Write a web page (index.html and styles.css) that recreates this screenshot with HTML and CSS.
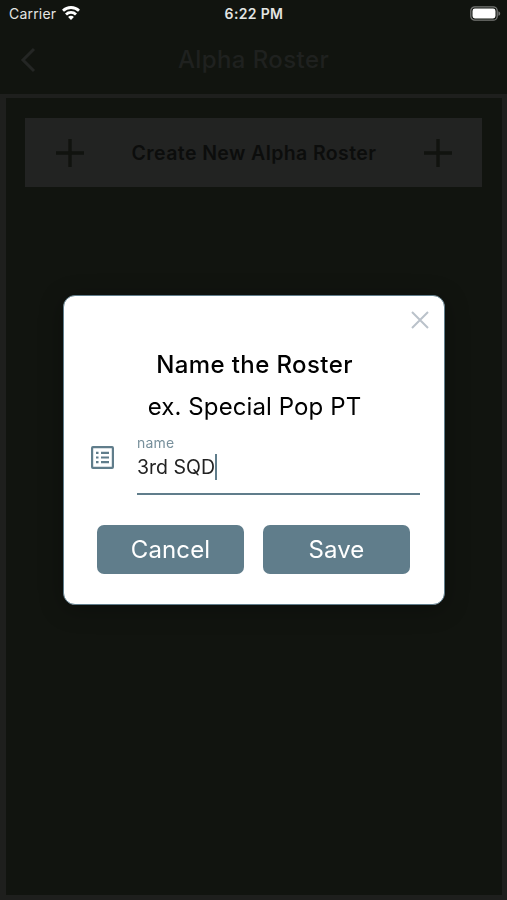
FILE: index.html
```html
<!DOCTYPE html>
<html lang="en">

<head>
    <meta charset="utf-8">
    <meta name="viewport" content="width=device-width, initial-scale=1">
    <title>Alpha Roster</title>
    <link rel="stylesheet" href="styles.css">
</head>

<body>
    <div class="status-bar">
        <div class="carrier">
            <span>Carrier</span>
            <svg class="wifi" width="18" height="14" viewBox="0 0 18 14" fill="none" stroke="#fff" stroke-width="2.8">
                <path d="M1 4.8a11.4 11.4 0 0 1 16 0" />
                <path d="M4 8.4a7.1 7.1 0 0 1 10 0" />
                <path d="M9 14L6.1 11.1a4 4 0 0 1 5.8 0z" fill="#fff" stroke="none" />
            </svg>
        </div>
        <span class="clock">6:22 PM</span>
        <svg class="battery" width="31" height="15" viewBox="0 0 31 15">
            <rect x=".8" y=".8" width="26.4" height="13.4" rx="4" fill="none" stroke="#777876" stroke-width="1.3" />
            <rect x="2.5" y="2.5" width="23" height="10" rx="2.4" fill="#fff" />
            <path d="M28.4 5.2c2.4.8 2.4 3.8 0 4.6z" fill="#777876" />
        </svg>
    </div>
    <header class="header">
        <svg class="back" width="16" height="26" viewBox="0 0 16 26" fill="none" stroke="#242624" stroke-width="3">
            <path d="M14 2L3 13l11 11" />
        </svg>
        <h1>Alpha Roster</h1>
    </header>
    <main class="content">
        <button class="create">
            <svg width="28" height="28" viewBox="0 0 28 28" stroke="#11130f" stroke-width="3.4">
                <path d="M14 0v28M0 14h28" />
            </svg>
            <span>Create New Alpha Roster</span>
            <svg width="28" height="28" viewBox="0 0 28 28" stroke="#11130f" stroke-width="3.4">
                <path d="M14 0v28M0 14h28" />
            </svg>
        </button>
    </main>

    <div class="overlay">
        <div class="dialog">
            <button class="close" aria-label="Close">
                <svg width="18" height="18" viewBox="0 0 18 18" stroke="#bac2ca" stroke-width="2">
                    <path d="M1 1l16 16M17 1L1 17" />
                </svg>
            </button>
            <h2>Name the Roster</h2>
            <p class="hint">ex. Special Pop PT</p>
            <div class="field">
                <svg class="list-icon" width="23" height="23" viewBox="0 0 23 23" fill="none" stroke="#607d8b" stroke-width="2.2">
                    <rect x="1.1" y="1.1" width="20.8" height="20.8" rx=".8" />
                    <path d="M5 6.9h2.5M5 11.5h2.5M5 16.1h2.5M10 6.9h8M10 11.5h8M10 16.1h8" />
                </svg>
                <div class="input">
                    <span class="label">name</span>
                    <div class="value"><span>3rd SQD</span><i class="caret"></i></div>
                </div>
            </div>
            <div class="actions">
                <button>Cancel</button>
                <button>Save</button>
            </div>
        </div>
    </div>
</body>

</html>
```
FILE: styles.css
```css
* {
    box-sizing: border-box;
    --slate: #607d8b;
    --backdrop: #11140f;
    --frame: #1e1f1d;
}

body {
    margin: 0;
    height: 100vh;
    display: flex;
    flex-direction: column;
    background: var(--backdrop);
    font-family: Inter, sans-serif;
    overflow: hidden;
}

h1,
h2,
p {
    margin: 0;
}

button {
    font-family: inherit;
    border: 0;
    padding: 0;
}

.status-bar {
    display: grid;
    grid-template-columns: 1fr auto 1fr;
    align-items: center;
    height: 27px;
    padding: 0 6px 0 9px;
    color: #e4e5e3;
    font-size: 14px;
}

.carrier {
    display: flex;
    align-items: center;
    gap: 6px;
    letter-spacing: 0.2px;
}

.wifi {
    margin-bottom: 1px;
}

.clock {
    margin-right: 2px;
    font-weight: 600;
    font-size: 14px;
    letter-spacing: 0.35px;
}

.battery {
    justify-self: end;
    margin-bottom: 1px;
}

.header {
    display: grid;
    grid-template-columns: 40px 1fr 40px;
    align-items: center;
    height: 67px;
    padding: 0 20px 2px;
}

h1 {
    color: #1f211f;
    font-size: 24px;
    font-weight: 500;
    letter-spacing: 0.4px;
    text-align: center;
}

.content {
    flex: 1;
    border: solid var(--frame);
    border-width: 4px 5px 5px 6px;
    padding: 20px 20px 20px 19px;
}

.create {
    display: flex;
    align-items: center;
    justify-content: space-between;
    width: 100%;
    height: 69px;
    padding: 0 30px 0 31px;
    background: #222322;
    color: #0c0d0c;
    font-size: 19.5px;
    font-weight: 600;
    letter-spacing: 0.4px;
}

.overlay {
    position: fixed;
    inset: 0;
    display: grid;
    place-items: center;
    padding-left: 1px;
}

.dialog {
    display: flex;
    flex-direction: column;
    width: 382px;
    height: 310px;
    padding: 15px 24px 30px 27px;
    background: #fff;
    border: 1px solid var(--slate);
    border-radius: 12px;
    box-shadow: 0 4px 24px rgba(0, 0, 0, 0.3);
    text-align: center;
}

.close {
    align-self: flex-end;
    width: 18px;
    height: 18px;
    margin-right: -9px;
    background: none;
}

.close svg {
    display: block;
}

h2 {
    margin: 21px 2px 0 0;
    font-size: 24px;
    font-weight: 500;
    line-height: 30px;
    letter-spacing: 0.4px;
}

.hint {
    margin: 12px 2px 0 0;
    font-size: 24px;
    line-height: 30px;
    letter-spacing: 0.1px;
}

.field {
    display: flex;
    gap: 23px;
    margin-top: 12px;
    text-align: left;
}

.list-icon {
    margin-top: 12px;
}

.input {
    flex: 1;
    height: 61px;
    border-bottom: 2px solid var(--slate);
}

.label {
    display: block;
    color: #78909c;
    font-size: 14px;
    line-height: 18px;
    letter-spacing: 0.2px;
}

.value {
    display: flex;
    align-items: center;
    height: 30px;
    color: #222;
    font-size: 19.5px;
}

.caret {
    width: 2px;
    height: 26px;
    background: var(--slate);
}

.actions {
    display: grid;
    grid-template-columns: 147px 147px;
    gap: 19px;
    margin: auto 10px 0 6px;
}

.actions button {
    height: 49px;
    background: var(--slate);
    border-radius: 7px;
    color: #fff;
    font-size: 24px;
    letter-spacing: 0.1px;
}
```
